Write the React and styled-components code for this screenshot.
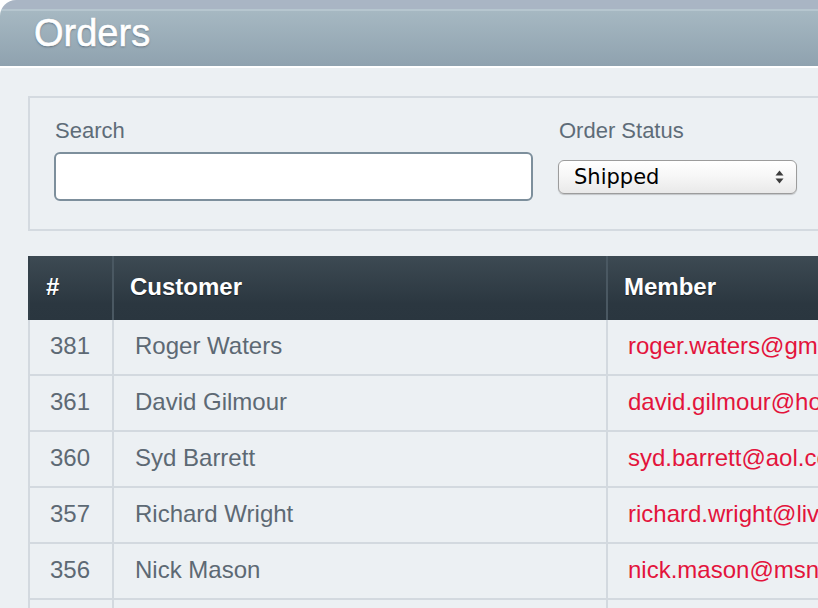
import React from 'react';
import styled, { createGlobalStyle } from 'styled-components';

const GlobalStyle = createGlobalStyle`
  html, body {
    margin: 0;
    padding: 0;
    background: #fff;
  }
  body {
    font-family: "Liberation Sans", Arial, sans-serif;
  }
`;

const Page = styled.div`
  width: 818px;
  height: 608px;
  overflow: hidden;
`;

const Window = styled.div`
  width: 1000px;
`;

const TitleBar = styled.header`
  height: 66px;
  border-top-left-radius: 16px;
  border-bottom: 2px solid #fff;
  background: linear-gradient(
    to bottom,
    #a9b5c4 0,
    #a9b5c4 9px,
    #b6c6cf 9px,
    #b6c6cf 11px,
    #a6b8c2 11px,
    #8fa2af 100%
  );
  padding-left: 34px;
`;

const Title = styled.h1`
  margin: 0;
  font-size: 38px;
  line-height: 66px;
  font-weight: normal;
  color: #fff;
  -webkit-text-stroke: 0.6px #fff;
  text-shadow: 0 1px 2px rgba(40, 55, 70, 0.6);
`;

const Content = styled.main`
  background: #ecf0f3;
  padding: 28px 0 0 28px;
  min-height: 600px;
`;

const FilterBox = styled.section`
  border: 2px solid #d4dae0;
  border-right: none;
  padding: 20px 0 28px 24px;
  display: flex;
  gap: 25px;
`;

const Field = styled.div`
  display: flex;
  flex-direction: column;
  gap: 8px;
`;

const Label = styled.label`
  font-size: 22px;
  line-height: 26px;
  color: #5e6c78;
  padding-left: 1px;
`;

const Control = styled.div`
  height: 49px;
  display: flex;
  align-items: center;
`;

const TextInput = styled.input`
  box-sizing: border-box;
  width: 479px;
  height: 49px;
  border: 2px solid #7d8f9c;
  border-radius: 6px;
  background: #fff;
  font-size: 20px;
  padding: 0 10px;
  outline: none;
`;

const SelectWrap = styled.div`
  position: relative;
  width: 239px;
  height: 34px;
`;

const Select = styled.select`
  appearance: none;
  -webkit-appearance: none;
  box-sizing: border-box;
  width: 100%;
  height: 100%;
  border: 1px solid #9c9c9c;
  border-radius: 6px;
  background: linear-gradient(to bottom, #ffffff 0%, #f7f7f7 45%, #e9e9e9 100%);
  box-shadow: 0 1px 1px rgba(0, 0, 0, 0.18);
  font-family: "DejaVu Sans", "Liberation Sans", sans-serif;
  font-size: 21px;
  color: #000;
  padding: 0 30px 0 15px;
  outline: none;
`;

const Arrows = styled.svg`
  position: absolute;
  right: 13px;
  top: 10px;
  pointer-events: none;
`;

const Table = styled.table`
  margin-top: 25px;
  width: 972px;
  table-layout: fixed;
  border-collapse: separate;
  border-spacing: 0;
`;

const HeadCell = styled.th`
  box-sizing: border-box;
  height: 64px;
  text-align: left;
  padding: 0 0 2px ${(p) => p.$pad}px;
  font-size: 24px;
  font-weight: bold;
  color: #fff;
  text-shadow: 0 1px 1px rgba(0, 0, 0, 0.45);
  background: linear-gradient(to bottom, #3d4a53 0%, #2b3740 75%, #2a363f 100%);
  border-left: 2px solid ${(p) => (p.$first ? '#34414a' : '#4a5862')};
`;

const Cell = styled.td`
  box-sizing: border-box;
  height: 56px;
  padding: 0 0 2px ${(p) => p.$pad}px;
  font-size: 24px;
  color: ${(p) => (p.$link ? '#e3143c' : '#5d6974')};
  border-left: 2px solid #d3d9df;
  border-bottom: 2px solid #d3d9df;
  white-space: nowrap;
  overflow: hidden;
`;

const orders = [
  { id: 381, name: 'Roger Waters', email: 'roger.waters@gmail.com' },
  { id: 361, name: 'David Gilmour', email: 'david.gilmour@hotmail.com' },
  { id: 360, name: 'Syd Barrett', email: 'syd.barrett@aol.com' },
  { id: 357, name: 'Richard Wright', email: 'richard.wright@live.com' },
  { id: 356, name: 'Nick Mason', email: 'nick.mason@msn.com' },
  { id: 352, name: 'Bob Klose', email: 'bob.klose@yahoo.com' },
];

export default function App() {
  return (
    <Page>
      <GlobalStyle />
      <Window>
        <TitleBar>
          <Title>Orders</Title>
        </TitleBar>
        <Content>
          <FilterBox>
            <Field>
              <Label htmlFor="search">Search</Label>
              <Control>
                <TextInput id="search" type="text" />
              </Control>
            </Field>
            <Field>
              <Label htmlFor="status">Order Status</Label>
              <Control>
                <SelectWrap>
                  <Select id="status" defaultValue="shipped">
                    <option value="all">All</option>
                    <option value="pending">Pending</option>
                    <option value="shipped">Shipped</option>
                    <option value="delivered">Delivered</option>
                  </Select>
                  <Arrows width="9" height="14" viewBox="0 0 9 14">
                    <path d="M4.5 0.5 L8.5 5.5 L0.5 5.5 Z" fill="#3c3c3c" />
                    <path d="M4.5 13.5 L8.5 8.5 L0.5 8.5 Z" fill="#3c3c3c" />
                  </Arrows>
                </SelectWrap>
              </Control>
            </Field>
          </FilterBox>

          <Table>
            <colgroup>
              <col style={{ width: 84 }} />
              <col style={{ width: 494 }} />
              <col />
            </colgroup>
            <thead>
              <tr>
                <HeadCell $first $pad={16}>#</HeadCell>
                <HeadCell $pad={16}>Customer</HeadCell>
                <HeadCell $pad={16}>Member</HeadCell>
              </tr>
            </thead>
            <tbody>
              {orders.map((o) => (
                <tr key={o.id}>
                  <Cell $pad={20}>{o.id}</Cell>
                  <Cell $pad={21}>{o.name}</Cell>
                  <Cell $pad={20} $link>{o.email}</Cell>
                </tr>
              ))}
            </tbody>
          </Table>
        </Content>
      </Window>
    </Page>
  );
}
